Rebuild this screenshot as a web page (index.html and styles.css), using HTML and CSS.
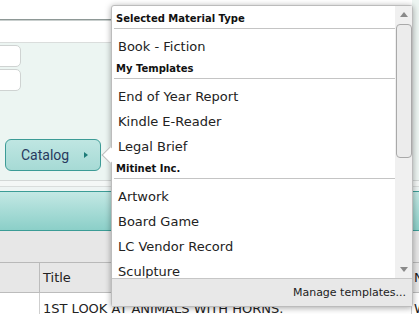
FILE: index.html
```html
<!DOCTYPE html>
<html>
<head>
<meta charset="utf-8">
<link rel="stylesheet" href="styles.css">
</head>
<body>
<div class="page">
  <div class="top">
    <div class="main">
      <div class="topbar"></div>
      <div class="subbar"></div>
      <div class="panel">
        <div class="field"></div>
        <div class="field field2"></div>
        <div class="catalog"><span>Catalog</span><span class="tri"></span></div>
      </div>
    </div>
    <div class="side"></div>
  </div>
  <div class="rules"></div>
  <div class="rules2"></div>
  <div class="tealbar"></div>
  <div class="greyarea"></div>
  <div class="hrow">
    <div class="c1"></div>
    <div class="c2">Title</div>
    <div class="c3">Name</div>
  </div>
  <div class="brow">
    <div class="c1"></div>
    <div class="c2">1ST LOOK AT ANIMALS WITH HORNS.</div>
    <div class="c3">WALKER</div>
  </div>

  <div class="popup">
    <div class="scrollwrap">
      <div class="list">
        <div class="grp-h">Selected Material Type</div>
        <ul class="items">
          <li>Book - Fiction</li>
        </ul>
        <div class="grp-h">My Templates</div>
        <ul class="items">
          <li>End of Year Report</li>
          <li>Kindle E-Reader</li>
          <li>Legal Brief</li>
        </ul>
        <div class="grp-h">Mitinet Inc.</div>
        <ul class="items">
          <li>Artwork</li>
          <li>Board Game</li>
          <li>LC Vendor Record</li>
          <li>Sculpture</li>
        </ul>
      </div>
      <div class="scrollbar">
        <div class="sb-btn"><span class="up"></span></div>
        <div class="thumb"></div>
        <div class="sb-space"></div>
        <div class="sb-btn"><span class="down"></span></div>
      </div>
    </div>
    <div class="footer">Manage templates...</div>
    <div class="pointer"></div>
  </div>
</div>
</body>
</html>
```
FILE: styles.css
```css
html, body {
  margin: 0;
  padding: 0;
}
body {
  width: 419px;
  height: 314px;
  overflow: hidden;
  background: #ffffff;
  font-family: "DejaVu Sans", Verdana, sans-serif;
}
.page {
  position: relative;
  width: 419px;
  height: 314px;
  overflow: hidden;
}
.top {
  display: flex;
}
.main {
  width: 412px;
}
.side {
  flex: 1;
  background: #edf5f2;
}
.topbar {
  height: 19px;
  background: #ffffff;
  border-bottom: 1px solid #8e9896;
  box-shadow: 0 1px 0 #c9cfce;
}
.subbar {
  height: 21px;
  margin-top: 1px;
  background: #ffffff;
  border-bottom: 1px solid #dadddc;
}
.panel {
  height: 137px;
  box-sizing: border-box;
  padding-top: 2px;
  background: #ecf5f2;
}
.field {
  width: 31px;
  height: 22px;
  box-sizing: border-box;
  margin-left: -10px;
  background: #ffffff;
  border: 1px solid #cfd3d2;
  border-radius: 5px;
}
.field2 {
  margin-top: 2px;
}
.catalog {
  margin-top: 48px;
  margin-left: 5px;
  width: 96px;
  height: 32px;
  box-sizing: border-box;
  border: 1px solid #3c9b96;
  border-radius: 6px;
  background: linear-gradient(#bfe6e2, #a6dad5);
  display: flex;
  align-items: center;
  padding-left: 15px;
  font-family: Roboto, "Noto Sans", sans-serif;
  font-size: 14px;
  color: #283a5e;
}
.tri {
  margin-left: 15px;
  width: 0;
  height: 0;
  border-top: 3.5px solid transparent;
  border-bottom: 3.5px solid transparent;
  border-left: 4px solid #1e7b78;
}
.rules {
  height: 5px;
  border-top: 1px solid #d3d7d6;
  border-bottom: 1px solid #d9dddc;
  background: #f4f7f6;
}
.rules2 {
  height: 4px;
  background: #eef4f3;
}
.tealbar {
  height: 38px;
  border-top: 1px solid #3b9c96;
  border-bottom: 1px solid #3b9c96;
  background: linear-gradient(#c3e8e4, #8bcfc8);
}
.greyarea {
  height: 31px;
  background: #e7e7e7;
}
.hrow {
  display: flex;
  height: 29px;
  border-top: 1px solid #b9b9b9;
  border-bottom: 1px solid #bcbcbc;
  background: #e7e7e7;
  font-size: 13px;
  color: #222;
}
.hrow > div, .brow > div {
  display: flex;
  align-items: center;
  white-space: nowrap;
  overflow: hidden;
}
.c1 {
  width: 39px;
  border-right: 1px solid #bcbcbc;
  flex: none;
}
.c2 {
  width: 368px;
  padding-left: 3px;
  border-right: 1px solid #bcbcbc;
  flex: none;
}
.c3 {
  padding-left: 2px;
  flex: 1;
}
.brow {
  display: flex;
  height: 30px;
  background: #ffffff;
  font-size: 13px;
  line-height: 16px;
  color: #222;
}
.brow > div {
  align-items: flex-start !important;
  padding-top: 8px;
}
.brow .c1, .brow .c2 {
  border-right-color: #cfcfcf;
}

/* popup */
.popup {
  position: absolute;
  left: 111px;
  top: 5px;
  width: 300px;
  height: 300px;
  border: 1px solid #bcbcbc;
  border-radius: 3px;
  background: #ffffff;
  box-shadow: 0 1px 6px rgba(0, 0, 0, 0.35);
  display: flex;
  flex-direction: column;
  z-index: 5;
}
.scrollwrap {
  height: 272px;
  display: flex;
}
.list {
  flex: 1;
  overflow: hidden;
  padding-top: 3px;
}
.grp-h {
  margin-left: 2px;
  padding: 3px 0 2px 2px;
  line-height: 14px;
  font-size: 10px;
  font-weight: bold;
  color: #111;
  border-bottom: 1px solid #c4c4c4;
}
.items {
  list-style: none;
  margin: 0;
  padding: 5px 0 0;
}
.items li {
  height: 25px;
  line-height: 25px;
  padding-left: 6px;
  font-size: 13px;
  color: #222;
  white-space: nowrap;
}
.scrollbar {
  width: 17px;
  background: #f0f0f0;
  display: flex;
  flex-direction: column;
}
.sb-btn {
  height: 17px;
  display: flex;
  align-items: center;
  justify-content: center;
  padding-left: 1px;
}
.up {
  width: 0;
  height: 0;
  border-left: 4px solid transparent;
  border-right: 4px solid transparent;
  border-bottom: 5px solid #8a8a8a;
}
.down {
  width: 0;
  height: 0;
  border-left: 4px solid transparent;
  border-right: 4px solid transparent;
  border-top: 5px solid #8a8a8a;
}
.thumb {
  margin-top: 1px;
  margin-left: 1px;
  height: 134px;
  box-sizing: border-box;
  border: 1px solid #a9a9a9;
  border-radius: 4px;
  background: #ececec;
}
.sb-space {
  flex: 1;
}
.footer {
  flex: 1;
  border-top: 1px solid #c6c6c6;
  background: #e8e8e8;
  display: flex;
  align-items: center;
  justify-content: flex-end;
  padding-right: 6px;
  font-size: 11px;
  color: #222;
}
.pointer {
  position: absolute;
  left: -8px;
  top: 143px;
  width: 11px;
  height: 11px;
  background: #ffffff;
  border-left: 1px solid #bcbcbc;
  border-bottom: 1px solid #bcbcbc;
  transform: rotate(45deg);
}
```
